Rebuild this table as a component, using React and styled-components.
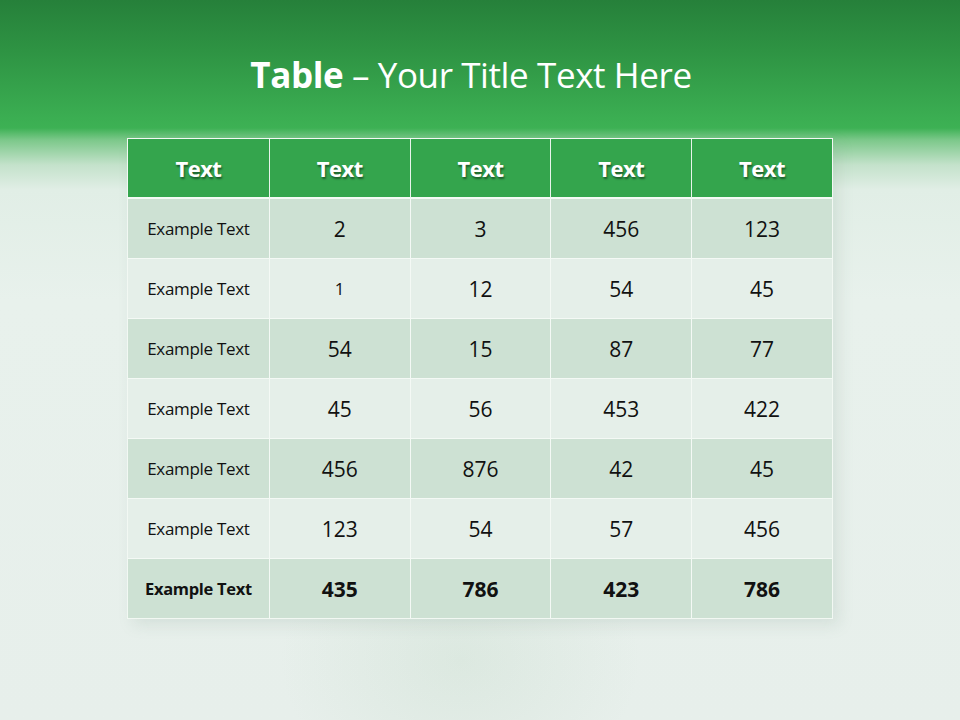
import React from 'react'
import styled, { createGlobalStyle } from 'styled-components'

const Global = createGlobalStyle`
  html, body {
    margin: 0;
    padding: 0;
  }
  body {
    width: 960px;
    height: 720px;
    overflow: hidden;
    font-family: "Open Sans", Lato, sans-serif;
  }
`

const Slide = styled.div`
  width: 960px;
  height: 720px;
  display: flex;
  flex-direction: column;
  align-items: center;
  background:
    radial-gradient(ellipse 180px 140px at 460px 660px, rgba(175, 205, 180, 0.2), rgba(175, 205, 180, 0) 100%),
    linear-gradient(
      180deg,
      #26803a 0px,
      #2e9343 50px,
      #3bae52 118px,
      #3db154 128px,
      #7cc88a 140px,
      #c4e2cb 165px,
      #e1eee6 190px,
      #e8f1ec 300px,
      #e7efeb 720px
    );
`

const Title = styled.h1`
  margin: 55px 18px 0 0;
  height: 40px;
  line-height: 40px;
  font-size: 35px;
  font-weight: 400;
  color: #ffffff;
  letter-spacing: -0.4px;

  b {
    font-weight: 700;
  }
`

const Grid = styled.div`
  margin-top: 43px;
  width: 704px;
  display: grid;
  grid-template-columns: repeat(5, 1fr);
  border: 1px solid #f2f8f3;
  box-shadow: 6px 6px 14px rgba(120, 150, 130, 0.16);
`

const Head = styled.div`
  height: 58px;
  display: flex;
  align-items: center;
  justify-content: center;
  background: #34a54d;
  color: #ffffff;
  font-size: 22px;
  font-weight: 700;
  letter-spacing: -0.5px;
  text-shadow: 1px 2px 2px rgba(0, 0, 0, 0.45);
  border-left: ${p => (p.$first ? 'none' : '1px solid #e9f4ec')};
  border-bottom: 2px solid #f4faf5;
`

const Cell = styled.div`
  height: 59px;
  display: flex;
  align-items: center;
  justify-content: center;
  background: ${p => (p.$dark ? '#cde1d3' : '#e5efe9')};
  color: #111;
  font-size: ${p => (p.$label ? (p.$bold ? '16.5px' : '17px') : p.$small ? '17px' : '21px')};
  font-weight: ${p => (p.$bold ? 700 : 400)};
  letter-spacing: ${p => (p.$label ? '-0.3px' : '0')};
  border-left: ${p => (p.$first ? 'none' : '1px solid #f4f9f5')};
  border-top: ${p => (p.$top ? 'none' : '1px solid #f4f9f5')};
`

const headers = ['Text', 'Text', 'Text', 'Text', 'Text']

const rows = [
  ['2', '3', '456', '123'],
  ['1', '12', '54', '45'],
  ['54', '15', '87', '77'],
  ['45', '56', '453', '422'],
  ['456', '876', '42', '45'],
  ['123', '54', '57', '456'],
  ['435', '786', '423', '786'],
]

export default function App() {
  return (
    <Slide>
      <Global />
      <Title>
        <b>Table</b> – Your Title Text Here
      </Title>
      <Grid>
        {headers.map((h, i) => (
          <Head key={'h' + i} $first={i === 0}>
            {h}
          </Head>
        ))}
        {rows.map((row, r) => {
          const dark = r % 2 === 0
          const bold = r === rows.length - 1
          return (
            <React.Fragment key={r}>
              <Cell $dark={dark} $label $first $top={r === 0} $bold={bold}>
                Example Text
              </Cell>
              {row.map((v, c) => (
                <Cell
                  key={c}
                  $dark={dark}
                  $top={r === 0}
                  $bold={bold}
                  $small={r === 1 && c === 0}
                >
                  {v}
                </Cell>
              ))}
            </React.Fragment>
          )
        })}
      </Grid>
    </Slide>
  )
}
